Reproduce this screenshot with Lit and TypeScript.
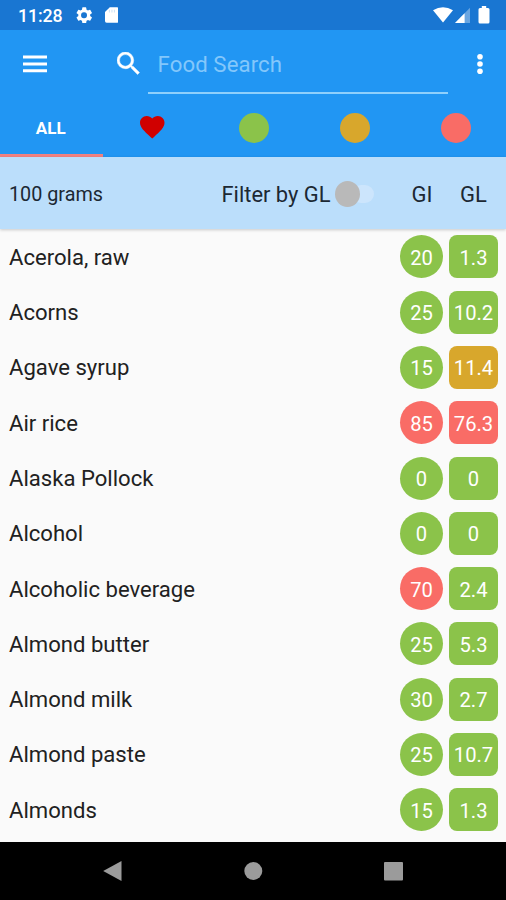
import { LitElement, html, svg, css } from "lit";
import { customElement, property } from "lit/decorators.js";

type Level = "low" | "mid" | "high";
interface Food { name: string; gi: number; giLevel: Level; gl: string; glLevel: Level; }

const food = (name: string, gi: number, giLevel: Level, gl: string, glLevel: Level): Food =>
  ({ name, gi, giLevel, gl, glLevel });

const FOODS: Food[] = [
  food("Acerola, raw", 20, "low", "1.3", "low"),
  food("Acorns", 25, "low", "10.2", "low"),
  food("Agave syrup", 15, "low", "11.4", "mid"),
  food("Air rice", 85, "high", "76.3", "high"),
  food("Alaska Pollock", 0, "low", "0", "low"),
  food("Alcohol", 0, "low", "0", "low"),
  food("Alcoholic beverage", 70, "high", "2.4", "low"),
  food("Almond butter", 25, "low", "5.3", "low"),
  food("Almond milk", 30, "low", "2.7", "low"),
  food("Almond paste", 25, "low", "10.7", "low"),
  food("Almonds", 15, "low", "1.3", "low"),
];

const levelColors = css`
  .low { background: #8bc34a; }
  .mid { background: #d8a72c; }
  .high { background: #f96c66; }
`;

@customElement("status-bar")
class StatusBar extends LitElement {
  static styles = css`
    :host { display: flex; align-items: center; height: 30.4px; padding: 0 16px 0 18px; box-sizing: border-box; background: #1976d2; color: #fff; }
    .time { font-size: 17.8px; font-weight: 500; letter-spacing: -.1px; width: 58px; line-height: 30px; padding-top: 2px; white-space: nowrap; }
    .gear { width: 16.5px; height: 16.5px; }
    .card { width: 13.5px; height: 16px; margin-left: 12px; }
    .spacer { flex: 1; }
    .wifi { width: 20px; height: 16px; }
    .signal { width: 15px; height: 16px; margin-left: 2px; }
    .battery { width: 12px; height: 18px; margin-left: 8px; }
    svg { display: block; fill: #fff; }
  `;
  render() {
    return html`
      <span class="time">11:28</span>
      <svg class="gear" viewBox="2 2 20 20"><path d="M19.14 12.94c.04-.3.06-.61.06-.94s-.02-.64-.07-.94l2.03-1.58a.49.49 0 0 0 .12-.61l-1.92-3.32a.49.49 0 0 0-.59-.22l-2.39.96a7 7 0 0 0-1.62-.94l-.36-2.54a.48.48 0 0 0-.48-.41h-3.84a.48.48 0 0 0-.47.41l-.36 2.54c-.59.24-1.13.57-1.62.94l-2.39-.96a.48.48 0 0 0-.59.22L2.74 8.87a.47.47 0 0 0 .12.61l2.03 1.58c-.05.3-.09.63-.09.94s.02.64.07.94l-2.03 1.58a.49.49 0 0 0-.12.61l1.92 3.32c.12.22.37.29.59.22l2.39-.96c.5.38 1.03.7 1.62.94l.36 2.54c.05.24.24.41.48.41h3.84c.24 0 .44-.17.47-.41l.36-2.54a6.9 6.9 0 0 0 1.62-.94l2.39.96c.22.08.47 0 .59-.22l1.92-3.32a.47.47 0 0 0-.12-.61zM12 15.6A3.61 3.61 0 1 1 12 8.4a3.61 3.61 0 0 1 0 7.2z"/></svg>
      <svg class="card" viewBox="0 0 14 16"><path d="M5 0h7.3Q14 0 14 1.7v12.6q0 1.7-1.7 1.7H1.7Q0 16 0 14.3V5z"/><path d="M4.6 2.5v3M7.2 2.5v3M9.8 2.5v3" stroke="#1976d2" stroke-opacity=".2" stroke-width="1.2"/></svg>
      <span class="spacer"></span>
      <svg class="wifi" viewBox="0 0 20 16"><path d="M0 3.3Q10-2.7 20 3.3L10 15.5z"/></svg>
      <svg class="signal" viewBox="0 0 15 16"><path d="M15 .8V16H0z" opacity=".35"/><path d="M9.6 6.3V16H0z"/></svg>
      <svg class="battery" viewBox="0 0 12 18"><path d="M3.8 0h4.4v2h1.8q1.5 0 1.5 1.5v12.5q0 1.5-1.5 1.5H2Q.5 17.5.5 16V3.5Q.5 2 2 2h1.8z"/></svg>
    `;
  }
}

@customElement("search-bar")
class SearchBar extends LitElement {
  static styles = css`
    :host { display: flex; height: 69.1px; background: #2196f3; padding: 0 22.5px 0 23px; box-sizing: border-box; }
    svg { display: block; fill: #fff; }
    .menu { width: 24px; height: 18px; margin-top: 25px; }
    .glass { width: 22.5px; height: 22.5px; margin: 22px 0 0 70px; }
    .field { width: 300px; height: 63.6px; box-sizing: border-box; margin-left: 8.5px; padding: 0 0 0 9.5px; border-bottom: 2px solid #8fd0fc; color: #83c7fb; font-size: 22.2px; line-height: 68px; letter-spacing: .1px; }
    .more { width: 8px; height: 22px; margin: 23px 0 0 auto; }
  `;
  render() {
    return html`
      <svg class="menu" viewBox="0 0 24 18"><path d="M0 .5h24v3H0zM0 7.5h24v3H0zM0 14.3h24v3H0z"/></svg>
      <svg class="glass" viewBox="3 3 17.49 17.49"><path d="M15.5 14h-.79l-.28-.27A6.471 6.471 0 0 0 16 9.5 6.5 6.5 0 1 0 9.5 16c1.61 0 3.09-.59 4.23-1.57l.27.28v.79l5 4.99L20.49 19l-4.99-5zm-6 0C7.01 14 5 11.99 5 9.5S7.01 5 9.5 5 14 7.01 14 9.5 11.99 14 9.5 14z" stroke="#fff" stroke-width=".35"/></svg>
      <div class="field">Food Search</div>
      <svg class="more" viewBox="0 0 8 22"><circle cx="4" cy="3.7" r="2.8"/><circle cx="4" cy="11" r="2.8"/><circle cx="4" cy="18.3" r="2.8"/></svg>
    `;
  }
}

@customElement("level-tabs")
class LevelTabs extends LitElement {
  static styles = [levelColors, css`
    :host { display: grid; grid-template-columns: 102px repeat(4, 101.1px); height: 58px; background: #2196f3; }
    .tab { display: flex; align-items: center; justify-content: center; box-sizing: border-box; padding-bottom: 1.5px; color: #fff; font-size: 17px; font-weight: 700; }
    .active { width: 103px; padding-right: 1.5px; border-bottom: 3px solid #f3817f; padding-bottom: 0; }
    .label { padding-top: 3px; }
    .dot { width: 30px; height: 30px; border-radius: 50%; }
    .heart { width: 24.5px; height: 22.5px; fill: #d00000; }
  `];
  render() {
    return html`
      <div class="tab active"><span class="label">ALL</span></div>
      <div class="tab"><svg class="heart" viewBox="2 3 20 18.35" preserveAspectRatio="none"><path d="M12 21.35l-1.45-1.32C5.4 15.36 2 12.28 2 8.5 2 5.42 4.42 3 7.5 3c1.74 0 3.41.81 4.5 2.09C13.09 3.81 14.76 3 16.5 3 19.58 3 22 5.42 22 8.5c0 3.78-3.4 6.86-8.55 11.54z"/></svg></div>
      ${(["low", "mid", "high"] as Level[]).map((l) => html`<div class="tab"><span class="dot ${l}"></span></div>`)}
    `;
  }
}

@customElement("filter-bar")
class FilterBar extends LitElement {
  static styles = css`
    :host { display: flex; align-items: center; height: 71.7px; padding: 2px 0 0 9px; box-sizing: border-box; background: #bbdefb; color: #1c2833; box-shadow: 0 1px 3px rgba(0, 0, 0, .2); position: relative; white-space: nowrap; }
    .amount { font-size: 19.8px; width: 212.5px; padding-top: 1px; }
    .filter { font-size: 21.9px; width: 113px; }
    .switch { display: flex; align-items: center; width: 40px; height: 28px; position: relative; z-index: 0; }
    .thumb { width: 25px; height: 26px; border-radius: 50%; background: #b9b9b9; }
    .track { width: 22px; height: 18px; margin-left: -8px; border-radius: 9px; background: #cce5fc; z-index: -1; }
    .col { font-size: 22px; text-align: center; }
    .gi { width: 43px; margin-left: 26px; }
    .gl { width: 50px; margin-left: 5px; }
  `;
  render() {
    return html`
      <span class="amount">100 grams</span>
      <span class="filter">Filter by GL</span>
      <span class="switch"><span class="thumb"></span><span class="track"></span></span>
      <span class="col gi">GI</span><span class="col gl">GL</span>
    `;
  }
}

@customElement("food-row")
class FoodRow extends LitElement {
  static styles = [levelColors, css`
    :host { display: flex; align-items: center; height: 55.3px; padding: 0 8px 0 9px; box-sizing: border-box; color: #212121; font-size: 22.1px; }
    .name { flex: 1; }
    .badge { display: flex; align-items: center; justify-content: center; height: 43px; color: #fff; padding-top: 2px; box-sizing: border-box; font-size: 20.2px; }
    .gi { width: 43px; border-radius: 50%; margin-right: 6px; }
    .gl { width: 49px; border-radius: 8px; }
  `];
  @property({ attribute: false }) item!: Food;
  render() {
    const f = this.item;
    return html`
      <span class="name">${f.name}</span>
      <span class="badge gi ${f.giLevel}">${f.gi}</span>
      <span class="badge gl ${f.glLevel}">${f.gl}</span>
    `;
  }
}

@customElement("nav-bar")
class NavBar extends LitElement {
  static styles = css`
    :host { display: flex; align-items: center; justify-content: center; gap: 122px; height: 58px; background: #000; }
    svg { display: block; width: 18px; height: 20px; fill: #9b9b9b; }
  `;
  render() {
    const shapes = [
      svg`<path d="M17.500 0v20L-.8 10z"/>`,
      svg`<circle cx="9.300" cy="10" r="9"/>`,
      svg`<rect y="1" width="19" height="18.500" rx="1"/>`,
    ];
    return shapes.map((s) => html`<svg viewBox="0 0 18 20" overflow="visible">${s}</svg>`);
  }
}

@customElement("app-root")
class AppRoot extends LitElement {
  static styles = css`
    :host { display: flex; flex-direction: column; width: 506px; height: 900px; overflow: hidden; background: #fafafa; font-family: Roboto, "Liberation Sans", sans-serif; }
    :host > * { flex: none; }
    .list { height: 612.8px; overflow: hidden; }
  `;
  render() {
    return html`
      <status-bar></status-bar>
      <search-bar></search-bar>
      <level-tabs></level-tabs>
      <filter-bar></filter-bar>
      <div class="list">${FOODS.map((f) => html`<food-row .item=${f}></food-row>`)}</div>
      <nav-bar></nav-bar>
    `;
  }
}
